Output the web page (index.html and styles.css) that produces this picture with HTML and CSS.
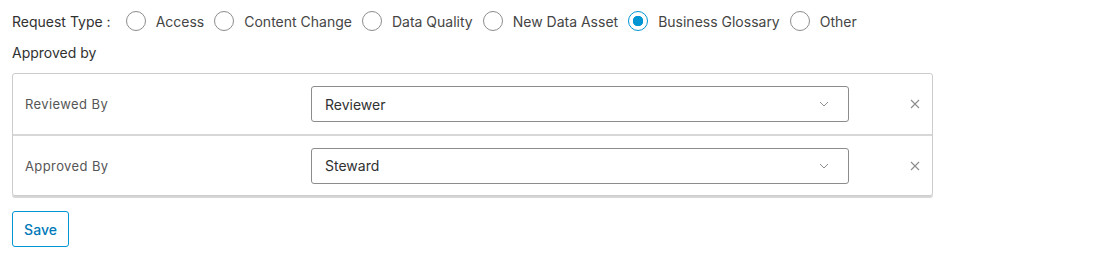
FILE: index.html
```html
<!DOCTYPE html>
<html lang="en">
<head>
    <meta charset="UTF-8">
    <title>Request Form</title>
    <link rel="stylesheet" href="styles.css">
</head>
<body>
    <div class="form">
        <div class="request-type">
            <span class="field-label">Request Type :</span>
            <label class="radio"><span class="dot"></span>Access</label>
            <label class="radio"><span class="dot"></span>Content Change</label>
            <label class="radio"><span class="dot"></span>Data Quality</label>
            <label class="radio"><span class="dot"></span>New Data Asset</label>
            <label class="radio checked"><span class="dot"></span>Business Glossary</label>
            <label class="radio"><span class="dot"></span>Other</label>
        </div>

        <div class="section-title">Approved by</div>

        <div class="card">
            <div class="row">
                <div class="row-label">Reviewed By</div>
                <div class="select">
                    <span>Reviewer</span>
                    <svg class="chevron" width="10" height="6" viewBox="0 0 10 6"><path d="M1 1l4 4 4-4" fill="none" stroke="#8c8c8c" stroke-width="1"/></svg>
                </div>
                <div class="remove">
                    <svg width="10" height="10" viewBox="0 0 10 10"><path d="M1 1l8 8M9 1l-8 8" stroke="#8c8c8c" stroke-width="1.1"/></svg>
                </div>
            </div>
            <div class="row">
                <div class="row-label">Approved By</div>
                <div class="select">
                    <span>Steward</span>
                    <svg class="chevron" width="10" height="6" viewBox="0 0 10 6"><path d="M1 1l4 4 4-4" fill="none" stroke="#8c8c8c" stroke-width="1"/></svg>
                </div>
                <div class="remove">
                    <svg width="10" height="10" viewBox="0 0 10 10"><path d="M1 1l8 8M9 1l-8 8" stroke="#8c8c8c" stroke-width="1.1"/></svg>
                </div>
            </div>
        </div>

        <button class="save">Save</button>
    </div>
</body>
</html>
```

FILE: styles.css
```css
body {
    margin: 0;
    font-family: Inter, "Noto Sans", sans-serif;
    color: #313131;
    background: #fff;
}
.form {
    padding: 10px 12px;
    width: 921px;
}
.request-type {
    display: flex;
    align-items: center;
    height: 22px;
    font-size: 14px;
}
.field-label {
    margin-right: 15px;
}
.radio {
    display: flex;
    align-items: center;
    color: #454545;
    margin-right: 10px;
}
.dot {
    width: 18px;
    height: 18px;
    border: 1px solid #8c8c8c;
    border-radius: 50%;
    margin-right: 10px;
    box-sizing: content-box;
}
.radio.checked .dot {
    border-color: #0095d3;
    background: radial-gradient(circle, #0095d3 0 5px, #fff 5.5px);
}
.section-title {
    font-size: 14px;
    margin-top: 10px;
    height: 22px;
    line-height: 22px;
}
.card {
    margin-top: 9px;
    border: 1px solid #cccccc;
    border-radius: 3px;
    box-shadow: 0 2px 0 0 #d7d7d7;
}
.row {
    display: flex;
    align-items: center;
    height: 60px;
    padding-left: 12px;
}
.row + .row {
    border-top: 2px solid #d7d7d7;
    height: 59px;
}
.row-label {
    width: 286px;
    font-size: 13px;
    letter-spacing: 0.4px;
    color: #565656;
}
.select {
    display: flex;
    align-items: center;
    justify-content: space-between;
    width: 538px;
    height: 36px;
    box-sizing: border-box;
    padding: 0 19px 0 13px;
    border: 1px solid #8c8c8c;
    border-radius: 3px;
    font-size: 14px;
    color: #313131;
}
.remove {
    flex: 1;
    display: flex;
    justify-content: flex-end;
    padding-right: 12px;
}
.save {
    margin-top: 15px;
    height: 36px;
    width: 57px;
    border: 1px solid #0095d3;
    border-radius: 3px;
    background: #fff;
    color: #0079b8;
    font-family: Inter, "Noto Sans", sans-serif;
    font-size: 14px;
    font-weight: 500;
    padding: 0;
}
```
